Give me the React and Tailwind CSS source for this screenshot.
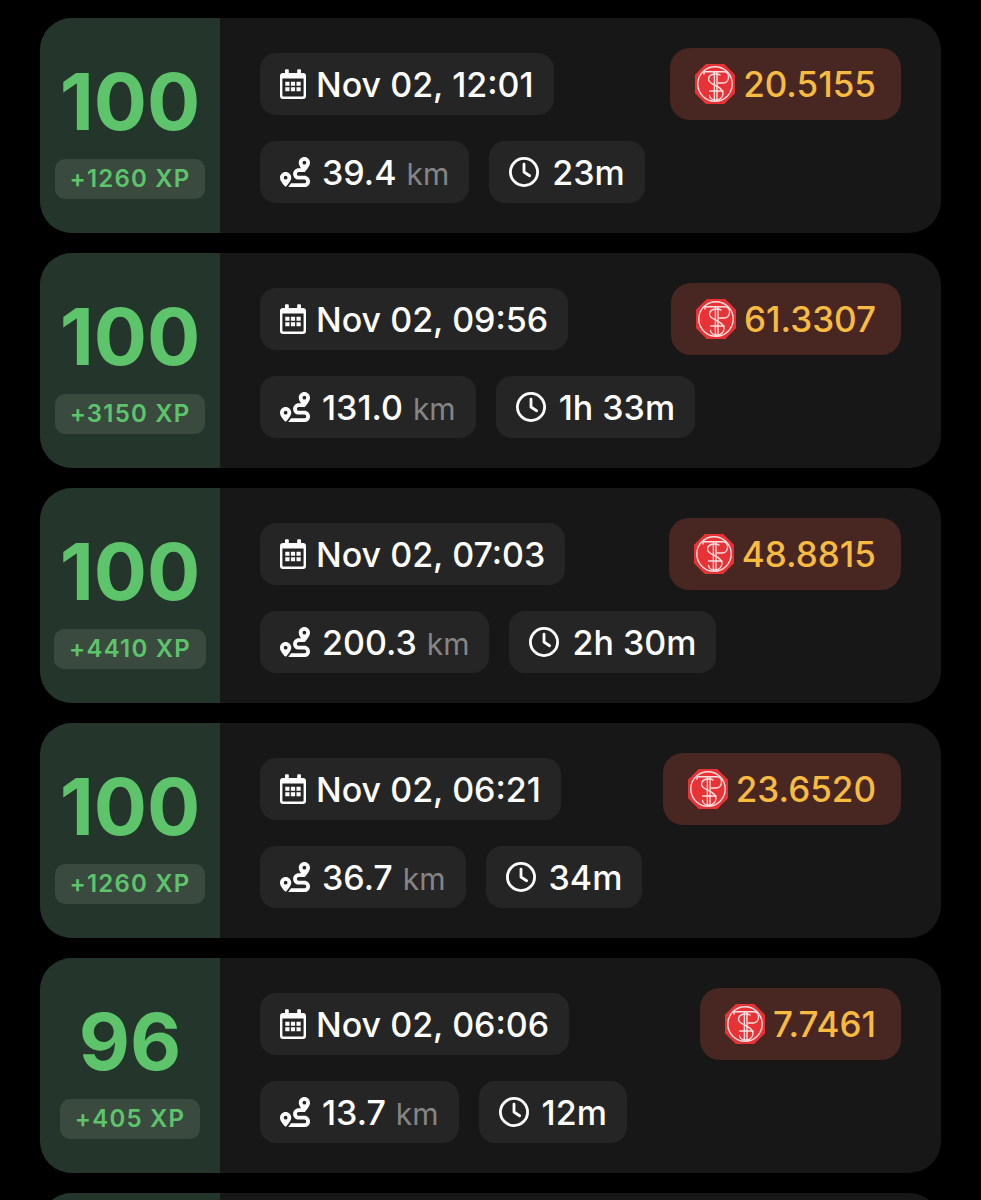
import { FaRegClock, FaRoute } from 'react-icons/fa6';

const rides = [
  { score: 100, xp: 1260, date: 'Nov 02, 12:01', km: '39.4', time: '23m', tokens: '20.5155' },
  { score: 100, xp: 3150, date: 'Nov 02, 09:56', km: '131.0', time: '1h 33m', tokens: '61.3307' },
  { score: 100, xp: 4410, date: 'Nov 02, 07:03', km: '200.3', time: '2h 30m', tokens: '48.8815' },
  { score: 100, xp: 1260, date: 'Nov 02, 06:21', km: '36.7', time: '34m', tokens: '23.6520' },
  { score: 96, xp: 405, date: 'Nov 02, 06:06', km: '13.7', time: '12m', tokens: '7.7461' },
];

function CalendarIcon() {
  return (
    <svg viewBox="0 0 26 30" className="w-[26px] h-[30px]" aria-hidden="true">
      <path
        fill="white"
        fillRule="evenodd"
        d="M5 1.2a1 1 0 0 1 1-1h1.8a1 1 0 0 1 1 1V4h8.4V1.2a1 1 0 0 1 1-1H20a1 1 0 0 1 1 1V4h2a3 3 0 0 1 3 3v20a3 3 0 0 1-3 3H3a3 3 0 0 1-3-3V7a3 3 0 0 1 3-3h2zM2.4 9.5V26.6a1 1 0 0 0 1 1h19.2a1 1 0 0 0 1-1V9.5z"
      />
      <path
        fill="white"
        d="M5.3 12.8h4.2v4h-4.2zM10.9 12.8h4.2v4h-4.2zM16.5 12.8h4.2v4h-4.2zM5.3 18.3h4.2v4h-4.2zM10.9 18.3h4.2v4h-4.2zM16.5 18.3h4.2v4h-4.2z"
      />
    </svg>
  );
}

function TokenIcon() {
  return (
    <svg viewBox="0 0 40 40" className="size-10" aria-hidden="true">
      <path fill="#e93235" d="M10.8 0h18.4L40 10.8v18.4L29.2 40H10.8L0 29.2V10.8z" />
      <g fill="none" stroke="#fde0e0" strokeWidth="1.4" strokeLinecap="round" strokeLinejoin="round">
        <circle cx="20" cy="20" r="17.2" />
        <path d="M9 10V7.8H29c6.500 0 6 11.200-1 11.200H23" />
        <path d="M19.400 7.800V37M22 7.800V37" />
        <path d="M25 11c-1-.700-2.500-1-4-1-4.500 0-7.500 2-7.500 5.200 0 6.300 14.500 6.300 14.500 14.300 0 4-3.500 6.500-7 6.500-3.500 0-6-1.500-6.500-4.500" />
        <path d="M14.500 27H28" />
      </g>
    </svg>
  );
}

function Chip({ children }) {
  return (
    <div className="h-[62px] px-5 flex items-center rounded-2xl bg-[#252525] text-white text-[34px]">
      {children}
    </div>
  );
}

function Card({ children }) {
  return <li className="h-[215px] shrink-0 flex rounded-4xl overflow-hidden bg-[#171717]">{children}</li>;
}

function Score({ children }) {
  return (
    <div className="w-[180px] shrink-0 flex flex-col items-center justify-center gap-[10px] bg-[#24362b] text-[#5ec46b]">
      {children}
    </div>
  );
}

function RideCard({ ride }) {
  return (
    <Card>
      <Score>
        <span className="text-[79px] leading-[96px] font-bold">{ride.score}</span>
        <span className="h-10 px-[15px] flex items-center rounded-[10px] bg-[#3a4a3f] text-2xl font-semibold tracking-wider">
          +{ride.xp} XP
        </span>
      </Score>
      <div className="flex-1 px-10 flex flex-col justify-center gap-[21px]">
        <div className="flex items-center justify-between">
          <Chip>
            <CalendarIcon />
            <time className="ml-[10px]">{ride.date}</time>
          </Chip>
          <div className="h-[72px] px-[25px] flex items-center gap-2 rounded-[20px] bg-[#482622] text-[#f7bb40] text-[35px]">
            <TokenIcon />
            <span>{ride.tokens}</span>
          </div>
        </div>
        <div className="flex gap-5">
          <Chip>
            <FaRoute className="size-[30px]" />
            <p className="ml-3 flex items-baseline gap-[10px]">
              {ride.km}
              <span className="text-[30px] font-normal text-[#858585]">km</span>
            </p>
          </Chip>
          <Chip>
            <FaRegClock className="size-[30px]" />
            <span className="ml-[13px]">{ride.time}</span>
          </Chip>
        </div>
      </div>
    </Card>
  );
}

export default function App() {
  return (
    <main className="h-screen overflow-hidden bg-black px-10 pt-[18px] font-['Inter',sans-serif] font-medium">
      <ul className="flex flex-col gap-5">
        {rides.map((ride) => (
          <RideCard key={ride.date} ride={ride} />
        ))}
        {/* next ride, still loading */}
        <Card>
          <Score />
        </Card>
      </ul>
    </main>
  );
}
